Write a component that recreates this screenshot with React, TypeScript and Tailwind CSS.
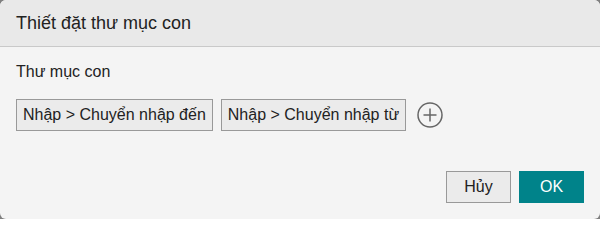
const folders = ['Nhập > Chuyển nhập đến', 'Nhập > Chuyển nhập từ'];

export default function App() {
    return (
        <div className="w-[600px] h-[219px] bg-[#7f7f7f] font-['Liberation_Sans',Arial,sans-serif]">
            <div className="w-full h-full rounded-[6px] overflow-hidden bg-[#f4f4f4] flex flex-col">
                <div className="h-[47px] shrink-0 bg-[#e9e9e9] border-b border-[#c9c9c9] px-4 flex items-center">
                    <h1 className="text-[18px] leading-[27px] text-[#222]">Thiết đặt thư mục con</h1>
                </div>

                <div className="px-4 pt-[15px] flex-1">
                    <p className="text-[16px] text-[#222] leading-[20px]">Thư mục con</p>
                    <div className="mt-[17px] flex items-center gap-2">
                        {folders.map((f) => (
                            <span
                                key={f}
                                className="h-[32px] px-[6px] flex items-center bg-[#ebebeb] border border-[#999] text-[16px] text-[#222]"
                            >
                                {f}
                            </span>
                        ))}
                        <button className="ml-[3px] w-[26px] h-[26px] text-[#666] flex items-center justify-center">
                            <svg width="26" height="26" viewBox="0 0 26 26" fill="none" stroke="currentColor" strokeWidth="1.5">
                                <circle cx="13" cy="13" r="12" />
                                <path d="M13 6.5v13M6.5 13h13" />
                            </svg>
                        </button>
                    </div>
                </div>

                <div className="flex justify-end gap-2 px-4 pb-4">
                    <button className="w-[65px] h-[32px] bg-[#ebebeb] border border-[#999] text-[16px] text-[#222]">Hủy</button>
                    <button className="w-[65px] h-[32px] bg-[#00838a] text-[16px] text-white">OK</button>
                </div>
            </div>
        </div>
    );
}
